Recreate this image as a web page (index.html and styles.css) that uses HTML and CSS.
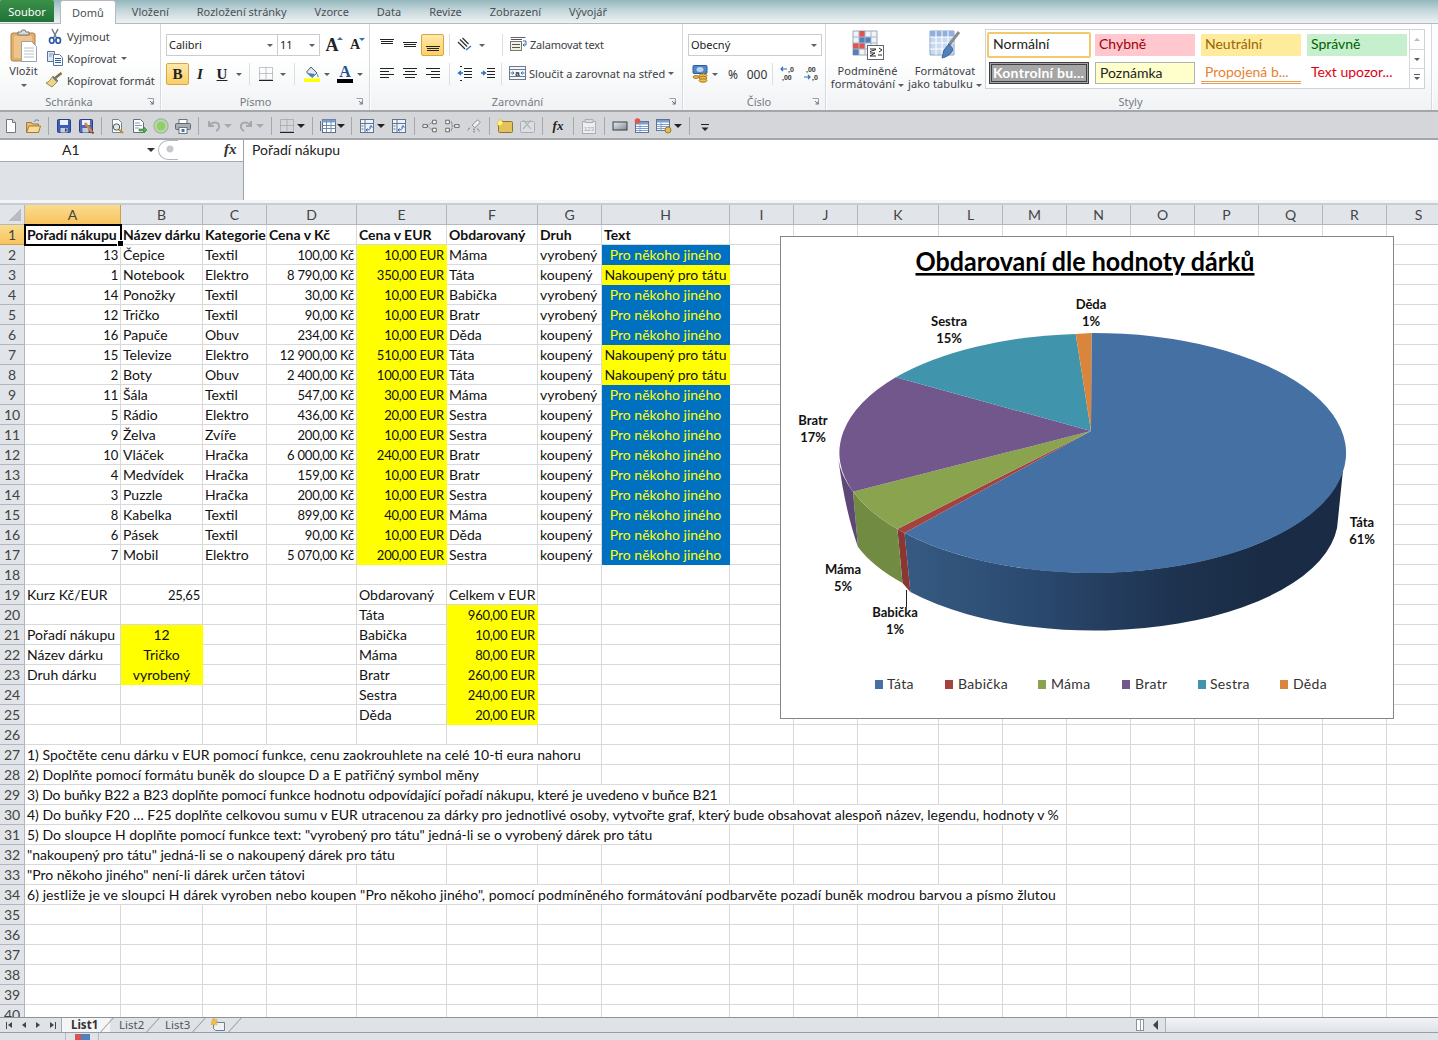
FILE: index.html
```html
<!DOCTYPE html>
<html lang="cs">

<head>
    <meta charset="UTF-8">
    <title>Excel - dárky</title>
    <link rel="stylesheet" href="styles.css">
</head>

<body>
    <!-- icon sprites -->
    <svg class="sprites" xmlns="http://www.w3.org/2000/svg">
        <symbol id="i-paste" viewBox="0 0 28 34">
            <rect x="1" y="4" width="24" height="28" rx="2" fill="#e3ae6c" stroke="#a98148"/>
            <rect x="4" y="7" width="18" height="22" fill="#eec48b"/>
            <path d="M8 6V3h3l1-2h3l1 2h3v3z" fill="#d9d9d9" stroke="#777"/>
            <path d="M11.500 12.500h10l5 5v15h-15z" fill="#fff" stroke="#9aa3ad"/>
            <path d="M14 19h10M14 22h10M14 25h10M14 28h10" stroke="#b9bfc6"/>
        </symbol>
        <symbol id="i-cut" viewBox="0 0 16 16">
            <path d="M5 1l4.500 9M11 1L6.500 10" stroke="#6f7c8a" stroke-width="1.500" fill="none"/>
            <ellipse cx="4.800" cy="12.500" rx="2.300" ry="2.800" fill="none" stroke="#2a58a6" stroke-width="1.700"/>
            <ellipse cx="11.200" cy="12.500" rx="2.300" ry="2.800" fill="none" stroke="#2a58a6" stroke-width="1.700"/>
        </symbol>
        <symbol id="i-copy" viewBox="0 0 16 16">
            <path d="M.5 1.500h7v10h-7z" fill="#dfe8f4" stroke="#56769f"/>
            <path d="M6.500 4.500h6l3 3v8h-9z" fill="#fff" stroke="#56769f"/>
            <path d="M8 8.500h6M8 10.500h6M8 12.500h6" stroke="#2f5d9b"/>
            <path d="M2 4h4M2 6h3" stroke="#7c97ba"/>
        </symbol>
        <symbol id="i-brush" viewBox="0 0 18 16">
            <path d="M16.500 1L9 7" stroke="#8a6d3b" stroke-width="2.500"/>
            <path d="M8 4l5 5-3 3-3 3-6-4c3-1 4-3 7-7z" fill="#efd58a" stroke="#a08845"/>
            <path d="M8 5l4 4" stroke="#5d7ba5" stroke-width="2"/>
        </symbol>
        <symbol id="i-borders" viewBox="0 0 16 16">
            <path d="M1.500 1.500h13v12h-13zM8 1.500v12M1.500 7.500h13" fill="none" stroke="#8a8f96" stroke-dasharray="1 1"/>
            <path d="M1 14.500h14" stroke="#222"/>
        </symbol>
        <symbol id="i-fill" viewBox="0 0 16 16">
            <path d="M7 1l6 6-5 4.500L2.500 6z" fill="#e4e9ef" stroke="#4c5a68"/>
            <path d="M3 7l8 1-3 3z" fill="#3d79c4"/>
            <path d="M13 7.500c1.500 2 2 3 1.500 3.500s-1.500 0-1.500-3.500z" fill="#4f87c9"/>
            <rect y="12.500" width="16" height="3.500" fill="#ffff00"/>
        </symbol>
        <symbol id="i-top" viewBox="0 0 16 16"><path d="M1 2.500h14M2 4.500h12M2 6.500h12" stroke="#222" fill="none"/></symbol>
        <symbol id="i-mid" viewBox="0 0 16 16"><path d="M1 5.500h14M2 7.500h12M2 9.500h12" stroke="#222" fill="none"/></symbol>
        <symbol id="i-bot" viewBox="0 0 16 16"><path d="M1 9.500h14M2 11.500h12M2 13.500h12" stroke="#222" fill="none"/></symbol>
        <symbol id="i-left" viewBox="0 0 16 16"><path d="M1 2.500h14M1 5.500h9M1 8.500h14M1 11.500h9" stroke="#222" fill="none"/></symbol>
        <symbol id="i-center" viewBox="0 0 16 16"><path d="M1 2.500h14M3 5.500h10M1 8.500h14M3 11.500h10" stroke="#222" fill="none"/></symbol>
        <symbol id="i-right" viewBox="0 0 16 16"><path d="M1 2.500h14M6 5.500h9M1 8.500h14M6 11.500h9" stroke="#222" fill="none"/></symbol>
        <symbol id="i-orient" viewBox="0 0 16 16">
            <path d="M1 5l7 7M3 2.500l7 7M5.500 1l6 6" stroke="#333" fill="none" stroke-width="1.300"/>
            <path d="M9 13l5-4" stroke="#3d6fb5" stroke-width="1.500"/>
        </symbol>
        <symbol id="i-outdent" viewBox="0 0 16 16">
            <path d="M7 2.500h8M7 5.500h8M7 8.500h8M7 11.500h8M5 14.500h-2M5 .5h-2" stroke="#222" fill="none"/>
            <path d="M6 7H2M4 5L1.500 7 4 9" stroke="#2f6fc0" stroke-width="1.300" fill="none"/>
        </symbol>
        <symbol id="i-indent" viewBox="0 0 16 16">
            <path d="M7 2.500h8M7 5.500h8M7 8.500h8M7 11.500h8" stroke="#222" fill="none"/>
            <path d="M1 7h4M3 5l2.500 2L3 9" stroke="#2f6fc0" stroke-width="1.300" fill="none"/>
        </symbol>
        <symbol id="i-wrap" viewBox="0 0 17 16">
            <path d="M.5 1.500h15" stroke="#666"/>
            <rect x=".5" y="5.500" width="11" height="9" fill="#f4f0e0" stroke="#777"/>
            <path d="M2 8.500h8M2 11.500h8M1 3.500h11" stroke="#555"/>
            <path d="M13 5h3v4h-3M14.500 7.500L13 9l1.500 1.500" stroke="#3a6cae" fill="none"/>
        </symbol>
        <symbol id="i-money" viewBox="0 0 16 18">
            <rect x="1" y=".5" width="14" height="8" rx="1" fill="#4f87c9" stroke="#2b5c9b"/>
            <ellipse cx="8" cy="4.500" rx="3.500" ry="2.500" fill="#bcd4ee"/>
            <ellipse cx="11" cy="10.500" rx="4" ry="1.700" fill="#f0bf47" stroke="#a87a1e"/>
            <ellipse cx="11" cy="13" rx="4" ry="1.700" fill="#f0bf47" stroke="#a87a1e"/>
            <ellipse cx="11" cy="15.500" rx="4" ry="1.700" fill="#f0bf47" stroke="#a87a1e"/>
            <ellipse cx="4" cy="12" rx="3" ry="1.400" fill="#f0bf47" stroke="#a87a1e"/>
        </symbol>
        <symbol id="i-cond" viewBox="0 0 32 30">
            <path d="M1 1h24v24H1z" fill="#f0f4fa" stroke="#9aa7b8"/>
            <path d="M7 1h6v6H7zM7 7h6v6H7z" fill="#e0534f"/>
            <path d="M7 7h12v6H7z" fill="#4f81bd"/>
            <path d="M1 13h12v6H1z" fill="#e0534f"/>
            <path d="M1 19h6v6H1z" fill="#4f81bd"/>
            <path d="M7 1v24M13 1v24M19 1v24M1 7h24M1 13h24M1 19h24" stroke="#a9b5c5" fill="none"/>
            <rect x="15.500" y="15.500" width="16" height="14" fill="#fff" stroke="#666"/>
            <path d="M18 19h6M18 21.500l6-2M18 23h5l-5 3h6M27 18l3 2-3 2M30 25h-4" stroke="#222" fill="none"/>
        </symbol>
        <symbol id="i-astable" viewBox="0 0 32 30">
            <path d="M1 1h24v24H1z" fill="#c9d9ef" stroke="#8ea6c7"/>
            <rect x="1" y="1" width="24" height="6" fill="#8fb0dc"/>
            <path d="M7 1v24M13 1v24M19 1v24M1 7h24M1 13h24M1 19h24" stroke="#fff" fill="none"/>
            <path d="M30 2L20 15" stroke="#8a8d90" stroke-width="3"/>
            <path d="M20 14l-5 6-2 8c4-1 9-3 11-9z" fill="#4f81bd" stroke="#3a6299"/>
        </symbol>
        <symbol id="i-new" viewBox="0 0 16 16"><path d="M3.500 1.500h6l3 3v10h-9z" fill="#fff" stroke="#6f7780"/><path d="M9.500 1.500v3h3" fill="#dfe5ec" stroke="#6f7780"/></symbol>
        <symbol id="i-open" viewBox="0 0 16 16">
            <path d="M1.500 4.500h5l1 1.500h6v8h-12z" fill="#e6be6b" stroke="#a37c32"/>
            <path d="M1.500 14.500l2.500-6.500h11.500l-2 6.500z" fill="#f6dc98" stroke="#a37c32"/>
            <path d="M9 4c1-2 3-3 5-1" stroke="#4d7fbf" fill="none"/>
        </symbol>
        <symbol id="i-save" viewBox="0 0 16 16">
            <rect x="1.500" y="1.500" width="13" height="13" rx="1" fill="#3b5fb5" stroke="#26408a"/>
            <rect x="4" y="2" width="8" height="5" fill="#eef2fa"/>
            <rect x="4.500" y="10" width="7" height="4.500" fill="#c7cfdc"/>
            <rect x="9" y="10.500" width="1.500" height="3" fill="#333"/>
        </symbol>
        <symbol id="i-saveall" viewBox="0 0 16 16">
            <rect x="1.500" y="1.500" width="13" height="13" rx="1" fill="#5468b0" stroke="#2c3d85"/>
            <rect x="4" y="2" width="8" height="5" fill="#eef2fa"/>
            <rect x="4.500" y="10" width="6" height="4.500" fill="#c7cfdc"/>
            <path d="M7 5l7 9" stroke="#d18a3e" stroke-width="2.500"/>
            <path d="M14 14l1.500 1.500" stroke="#a33" stroke-width="2"/>
        </symbol>
        <symbol id="i-preview" viewBox="0 0 16 16">
            <path d="M3.500 1.500h6l3 3v10h-9z" fill="#fff" stroke="#7a828c"/>
            <circle cx="7.500" cy="9" r="3.200" fill="#dbe8f5" stroke="#555"/>
            <path d="M10 11.500l4 3.500" stroke="#c78a30" stroke-width="2"/>
        </symbol>
        <symbol id="i-publish" viewBox="0 0 16 16">
            <path d="M2.500 1.500h7l3 3v10h-10z" fill="#fff" stroke="#66707c"/>
            <path d="M4 5h5M4 7.500h7M4 10h4" stroke="#7c98bd"/>
            <path d="M8 11h5V9l3 3-3 3v-2H8z" fill="#53b04a" stroke="#33802c" stroke-width=".6"/>
        </symbol>
        <symbol id="i-orb" viewBox="0 0 16 16">
            <circle cx="8" cy="8" r="7" fill="#bcdca6" stroke="#a9b7a5" stroke-width="1.500"/>
            <circle cx="8" cy="8" r="4.500" fill="#8fce6b"/>
        </symbol>
        <symbol id="i-print" viewBox="0 0 16 16">
            <rect x="4" y="1.500" width="8" height="5" fill="#fff" stroke="#6d757e"/>
            <rect x=".5" y="5.500" width="15" height="6" rx="1" fill="#a8aeb6" stroke="#5f666e"/>
            <rect x="4" y="9.500" width="8" height="6" fill="#fff" stroke="#6d757e"/>
            <rect x="6.500" y="11" width="3" height="3" fill="#3f77bd"/>
        </symbol>
        <symbol id="i-undo" viewBox="0 0 16 16"><path d="M3 3v5h5M3.500 8C5 4 12 3 13 7.500c.5 2.500-1 4.500-3 5.500" fill="none" stroke="#a5a9ae" stroke-width="2"/></symbol>
        <symbol id="i-redo" viewBox="0 0 16 16"><path d="M13 3v5H8M12.500 8C11 4 4 3 3 7.500c-.5 2.500 1 4.500 3 5.500" fill="none" stroke="#a5a9ae" stroke-width="2"/></symbol>
        <symbol id="i-tablelist" viewBox="0 0 16 16">
            <rect x="2.500" y="1.500" width="13" height="13" fill="#fff" stroke="#5d6f86"/>
            <rect x="2.500" y="1.500" width="13" height="3" fill="#7d9fcf"/>
            <path d="M2.500 7.500h13M2.500 10.500h13M6.500 1.500v13M11 1.500v13" stroke="#6e8bb3"/>
            <path d="M.5 3v10" stroke="#5d6f86"/>
        </symbol>
        <symbol id="i-pivot" viewBox="0 0 16 16">
            <rect x="1.500" y="1.500" width="13" height="13" fill="#eef3fa" stroke="#61758f"/>
            <path d="M1.500 5.500h13M6 1.500v13" stroke="#61758f"/>
            <path d="M2.500 8h2M2.500 11h2" stroke="#61758f"/>
            <path d="M8 12c3 0 4-2 4-4M10.500 9.500L12 7.500l1.500 2M8.500 10.500L7 12l1.500 1.500" stroke="#2c6bb6" fill="none"/>
        </symbol>
        <symbol id="i-shapes-l" viewBox="0 0 18 16">
            <path d="M12 1.500h4v4h-4zM12 10.500h4v4h-4zM1 6.500h5v3H1z" fill="#fff" stroke="#555"/>
            <path d="M6 8l6-5M6 8l6 5" stroke="#555" stroke-dasharray="1 1"/>
        </symbol>
        <symbol id="i-shapes-r" viewBox="0 0 18 16">
            <path d="M2 1.500h4v4H2zM2 10.500h4v4H2zM12 6.500h5v3h-5z" fill="#fff" stroke="#555"/>
            <path d="M6 3.500h3V8h3M6 12.500h3V8" stroke="#555" stroke-dasharray="1 1" fill="none"/>
        </symbol>
        <symbol id="i-eraser" viewBox="0 0 18 16">
            <path d="M7 7l6-6 3 3-6 6z" fill="#eef1f5" stroke="#7a828c"/>
            <path d="M4 10l-2 3M9 11v4M13 11l2 3" stroke="#444" stroke-dasharray="1.500 1"/>
        </symbol>
        <symbol id="i-stick" viewBox="0 0 16 16">
            <rect x="1.500" y="3.500" width="14" height="11" rx="1" fill="#e3c25d" stroke="#8e7530"/>
            <path d="M3 1l1 2 2-1-1 2 2 1-2 1 1 2-2-1-1 2-1-2-2 1 1-2-1-1z" fill="#fff27a" stroke="#d5b62d" stroke-width=".5"/>
        </symbol>
        <symbol id="i-stick-off" viewBox="0 0 16 16">
            <rect x="1.500" y="3.500" width="14" height="11" rx="1" fill="#dcdee1" stroke="#aaaeb3"/>
            <path d="M4 2l8 9M4 11l8-9" stroke="#b3b7bb" stroke-width="1.300"/>
        </symbol>
        <symbol id="i-rect" viewBox="0 0 16 16">
            <rect x="1" y="4" width="14" height="8" fill="url(#rect-fade)" stroke="#3a3f45"/>
        </symbol>
        <symbol id="i-form" viewBox="0 0 16 16">
            <rect x="1.500" y="3.500" width="13" height="11" fill="#fff" stroke="#5f7390"/>
            <rect x="2" y="4" width="12" height="2.500" fill="#7d9fcf"/>
            <path d="M2 8.500h12M2 10.500h12M2 12.500h12M6 6.500v8" stroke="#7d9fcf"/>
            <circle cx="3.500" cy="3" r="2.800" fill="#e2574c"/>
        </symbol>
        <symbol id="i-formedit" viewBox="0 0 16 16">
            <rect x=".5" y="1.500" width="13" height="11" fill="#fff" stroke="#5f7390"/>
            <rect x="1" y="2" width="12" height="2.500" fill="#7d9fcf"/>
            <path d="M1 6.500h12M1 8.500h12M1 10.500h12M5 4.500v8" stroke="#7d9fcf"/>
            <circle cx="12" cy="12" r="3" fill="#e3bd52" stroke="#987c28"/>
        </symbol>
        <symbol id="i-custom" viewBox="0 0 12 16">
            <path d="M2 6.500h8" stroke="#222"/><path d="M2.500 9.500h7L6 13z" fill="#222"/>
        </symbol>
        <symbol id="i-launch" viewBox="0 0 8 8">
            <path d="M.5 .5h6v6" fill="none" stroke="#9ba1a8"/>
            <path d="M3 3l3 3M6 3.500V6H3.500" fill="none" stroke="#6d7580"/>
        </symbol>
        <symbol id="i-newsheet" viewBox="0 0 16 14">
            <path d="M3.500 4.500h11v8h-9l-2-2z" fill="#eef2f6" stroke="#6a7f98"/>
            <path d="M4 0l1 2 2-1-1 2 2 1-2 1 1 2-2-1-1 2-1-2-2 1 1-2-1-1 2-1-1-2 2 1z" fill="#f4c141" stroke="#c4912a" stroke-width=".4"/>
        </symbol>
        <linearGradient id="rect-fade" x1="0" y1="0" x2="1" y2="1">
            <stop offset="0" stop-color="#e8ebee"/>
            <stop offset="1" stop-color="#7f8a96"/>
        </linearGradient>
    </svg>

    <!-- ribbon tabs -->
    <nav class="tabs">
        <span class="tab-file">Soubor</span>
        <span class="tab tab-active">Domů</span>
        <span class="tab">Vložení</span>
        <span class="tab">Rozložení stránky</span>
        <span class="tab">Vzorce</span>
        <span class="tab">Data</span>
        <span class="tab">Revize</span>
        <span class="tab">Zobrazení</span>
        <span class="tab">Vývojář</span>
    </nav>

    <!-- ribbon -->
    <div class="ribbon">
        <section class="group group-clip">
            <div class="group-body clip-body">
                <div class="big-btn paste-btn">
                    <svg class="ico-paste"><use href="#i-paste"/></svg>
                    <span class="big-label">Vložit</span>
                    <i class="caret"></i>
                </div>
                <div class="clip-list">
                    <div class="clip-row"><svg class="ico"><use href="#i-cut"/></svg><span>Vyjmout</span></div>
                    <div class="clip-row"><svg class="ico"><use href="#i-copy"/></svg><span>Kopírovat</span><i class="caret caret-near"></i></div>
                    <div class="clip-row"><svg class="ico ico-brush"><use href="#i-brush"/></svg><span>Kopírovat formát</span></div>
                </div>
            </div>
            <div class="group-label">Schránka<svg class="launch"><use href="#i-launch"/></svg></div>
        </section>

        <section class="group group-font">
            <div class="group-body stack">
                <div class="tool-row">
                    <div class="combo combo-font"><span>Calibri</span><i class="caret"></i></div>
                    <div class="combo combo-size"><span>11</span><i class="caret"></i></div>
                    <span class="tool grow-a">A<i class="tri-up"></i></span>
                    <span class="tool shrink-a">A<i class="tri-down"></i></span>
                </div>
                <div class="tool-row">
                    <span class="tool tool-on tool-b face-b">B</span>
                    <span class="tool face-i">I</span>
                    <span class="tool face-u">U</span>
                    <span class="drop"><i class="caret"></i></span>
                    <i class="sep ml5"></i>
                    <span class="tool ml5"><svg class="ico"><use href="#i-borders"/></svg></span>
                    <span class="drop"><i class="caret"></i></span>
                    <i class="sep ml6"></i>
                    <span class="tool ml6"><svg class="ico"><use href="#i-fill"/></svg></span>
                    <span class="drop drop-sm"><i class="caret"></i></span>
                    <span class="tool ml4 face-color">A<i class="color-bar"></i></span>
                    <span class="drop drop-sm"><i class="caret"></i></span>
                </div>
            </div>
            <div class="group-label">Písmo<svg class="launch"><use href="#i-launch"/></svg></div>
        </section>

        <section class="group group-align">
            <div class="group-body stack">
                <div class="tool-row">
                    <span class="tool tool-w"><svg class="ico"><use href="#i-top"/></svg></span>
                    <span class="tool tool-w"><svg class="ico"><use href="#i-mid"/></svg></span>
                    <span class="tool tool-w tool-on"><svg class="ico"><use href="#i-bot"/></svg></span>
                    <i class="sep ml5"></i>
                    <span class="tool ml4"><svg class="ico"><use href="#i-orient"/></svg></span>
                    <span class="drop"><i class="caret"></i></span>
                    <i class="sep ml15"></i>
                    <span class="wide-btn"><svg class="ico ico-wide"><use href="#i-wrap"/></svg><span class="wrap-text">Zalamovat text</span></span>
                </div>
                <div class="tool-row">
                    <span class="tool tool-w"><svg class="ico"><use href="#i-left"/></svg></span>
                    <span class="tool tool-w"><svg class="ico"><use href="#i-center"/></svg></span>
                    <span class="tool tool-w"><svg class="ico"><use href="#i-right"/></svg></span>
                    <i class="sep ml5"></i>
                    <span class="tool ml4"><svg class="ico"><use href="#i-outdent"/></svg></span>
                    <span class="tool ml1"><svg class="ico"><use href="#i-indent"/></svg></span>
                    <i class="sep ml2"></i>
                    <span class="wide-btn">
                        <svg class="ico ico-wide" viewBox="0 0 17 16">
                            <rect x=".5" y="1.500" width="16" height="13" fill="#f3f6fb" stroke="#6c7a8c"/>
                            <path d="M.5 4.500h16M.5 11.500h16" stroke="#6c7a8c"/>
                            <path d="M1.500 8H5M3.500 6.500L5 8 3.500 9.500M15.500 8H12M13.500 6.500L12 8l1.500 1.500" stroke="#3a6cae" fill="none"/>
                            <text x="8.500" y="10.500" class="svg-mini">a</text>
                        </svg>
                        Sloučit a zarovnat na střed<i class="caret"></i>
                    </span>
                </div>
            </div>
            <div class="group-label">Zarovnání<svg class="launch"><use href="#i-launch"/></svg></div>
        </section>

        <section class="group group-number">
            <div class="group-body stack">
                <div class="tool-row">
                    <div class="combo combo-format"><span>Obecný</span><i class="caret"></i></div>
                </div>
                <div class="tool-row">
                    <span class="tool ml1"><svg class="ico ico-tall"><use href="#i-money"/></svg></span>
                    <span class="drop drop-md"><i class="caret"></i></span>
                    <span class="tool ml3 face-num">%</span>
                    <span class="tool ml2 face-num">000</span>
                    <i class="sep ml4"></i>
                    <span class="tool ml4">
                        <svg class="ico" viewBox="0 0 16 16">
                            <path d="M7 3H1M3 1L1 3l2 2" stroke="#2f6fc0" stroke-width="1.200" fill="none"/>
                            <text x="8" y="6" class="svg-digits">,0</text>
                            <text x="2" y="14" class="svg-digits">,00</text>
                        </svg>
                    </span>
                    <span class="tool ml1">
                        <svg class="ico" viewBox="0 0 16 16">
                            <text x="3" y="6" class="svg-digits">,00</text>
                            <path d="M1 11h6M5 9l2 2-2 2" stroke="#2f6fc0" stroke-width="1.200" fill="none"/>
                            <text x="9" y="14" class="svg-digits">,0</text>
                        </svg>
                    </span>
                </div>
            </div>
            <div class="group-label">Číslo<svg class="launch"><use href="#i-launch"/></svg></div>
        </section>

        <section class="group group-styles">
            <div class="group-body styles-body">
                <div class="big-btn cond-btn">
                    <svg class="ico-big"><use href="#i-cond"/></svg>
                    <span class="big-label">Podmíněné<br>formátování<i class="caret caret-inline"></i></span>
                </div>
                <div class="big-btn table-btn">
                    <svg class="ico-big"><use href="#i-astable"/></svg>
                    <span class="big-label">Formátovat<br>jako tabulku<i class="caret caret-inline"></i></span>
                </div>
                <div class="gallery">
                    <div class="gallery-grid">
                        <span class="cs cs-normal">Normální</span>
                        <span class="cs cs-bad">Chybně</span>
                        <span class="cs cs-neutral">Neutrální</span>
                        <span class="cs cs-good">Správně</span>
                        <span class="cs cs-check">Kontrolní bu...</span>
                        <span class="cs cs-note">Poznámka</span>
                        <span class="cs cs-linked">Propojená b...</span>
                        <span class="cs cs-warn">Text upozor...</span>
                    </div>
                    <div class="gallery-scroll">
                        <span><i class="tri-up tri-off"></i></span>
                        <span><i class="caret"></i></span>
                        <span class="gallery-more"><i class="caret"></i></span>
                    </div>
                </div>
            </div>
            <div class="group-label">Styly</div>
        </section>
    </div>

    <!-- quick access toolbar -->
    <div class="qat">
        <svg class="qi"><use href="#i-new"/></svg>
        <svg class="qi"><use href="#i-open"/></svg>
        <i class="qsep"></i>
        <svg class="qi"><use href="#i-save"/></svg>
        <svg class="qi"><use href="#i-saveall"/></svg>
        <i class="qsep"></i>
        <svg class="qi"><use href="#i-preview"/></svg>
        <svg class="qi"><use href="#i-publish"/></svg>
        <svg class="qi"><use href="#i-orb"/></svg>
        <svg class="qi"><use href="#i-print"/></svg>
        <i class="qsep"></i>
        <svg class="qi"><use href="#i-undo"/></svg>
        <i class="qarrow qarrow-off"></i>
        <svg class="qi"><use href="#i-redo"/></svg>
        <i class="qarrow qarrow-off"></i>
        <i class="qsep"></i>
        <svg class="qi"><use href="#i-borders"/></svg>
        <i class="qarrow"></i>
        <i class="qsep"></i>
        <svg class="qi"><use href="#i-tablelist"/></svg>
        <i class="qarrow qarrow-tight"></i>
        <i class="qsep"></i>
        <svg class="qi"><use href="#i-pivot"/></svg>
        <i class="qarrow"></i>
        <svg class="qi"><use href="#i-pivot"/></svg>
        <i class="qsep"></i>
        <svg class="qi"><use href="#i-shapes-l"/></svg>
        <svg class="qi"><use href="#i-shapes-r"/></svg>
        <svg class="qi"><use href="#i-eraser"/></svg>
        <i class="qsep"></i>
        <svg class="qi"><use href="#i-stick"/></svg>
        <svg class="qi"><use href="#i-stick-off"/></svg>
        <i class="qsep"></i>
        <span class="qi qfx">fx</span>
        <i class="qsep"></i>
        <svg class="qi" viewBox="0 0 16 16">
            <rect x="1.500" y="3.500" width="13" height="12" fill="#eceef1" stroke="#aaaeb3"/>
            <path d="M4 1.500h8v3H4z" fill="#d9dbde" stroke="#aaaeb3"/>
            <text x="8" y="13" class="svg-calc">123</text>
        </svg>
        <i class="qsep"></i>
        <svg class="qi"><use href="#i-rect"/></svg>
        <svg class="qi"><use href="#i-form"/></svg>
        <svg class="qi"><use href="#i-formedit"/></svg>
        <i class="qarrow"></i>
        <i class="qsep"></i>
        <svg class="qi"><use href="#i-custom"/></svg>
    </div>

    <!-- formula bar -->
    <div class="formula">
        <div class="formula-left">
            <div class="formula-top">
                <div class="name-box">A1<i class="caret"></i></div>
                <div class="grip"></div>
                <span class="fx">fx</span>
            </div>
        </div>
        <div class="formula-input">Pořadí nákupu</div>
    </div>
    <div class="formula-gap"></div>

    <!-- sheet -->
    <div class="sheet">
        <table class="cells">
            <colgroup>
                <col class="c-head"><col class="c-a"><col class="c-b"><col class="c-c"><col class="c-d"><col class="c-e"><col class="c-f"><col class="c-g"><col class="c-h"><col class="c-std"><col class="c-std"><col class="c-k"><col class="c-std"><col class="c-std"><col class="c-std"><col class="c-std"><col class="c-std"><col class="c-std"><col class="c-std"><col class="c-std">
            </colgroup>
            <tr class="col-heads"><th class="corner"></th><th class="on">A</th><th>B</th><th>C</th><th>D</th><th>E</th><th>F</th><th>G</th><th>H</th><th>I</th><th>J</th><th>K</th><th>L</th><th>M</th><th>N</th><th>O</th><th>P</th><th>Q</th><th>R</th><th>S</th></tr>
            <tr class="title-row"><th class="on">1</th><td class="active">Pořadí nákupu</td><td>Název dárku</td><td>Kategorie</td><td>Cena v Kč</td><td>Cena v EUR</td><td>Obdarovaný</td><td>Druh</td><td>Text</td><td></td><td></td><td></td><td></td><td></td><td></td><td></td><td></td><td></td><td></td><td></td></tr>
            <tr><th>2</th><td class="num">13</td><td>Čepice</td><td>Textil</td><td class="num">100,00 Kč</td><td class="num yellow">10,00 EUR</td><td>Máma</td><td>vyrobený</td><td class="ctr blue">Pro někoho jiného</td><td></td><td></td><td></td><td></td><td></td><td></td><td></td><td></td><td></td><td></td><td></td></tr>
            <tr><th>3</th><td class="num">1</td><td>Notebook</td><td>Elektro</td><td class="num">8 790,00 Kč</td><td class="num yellow">350,00 EUR</td><td>Táta</td><td>koupený</td><td class="ctr yellow">Nakoupený pro tátu</td><td></td><td></td><td></td><td></td><td></td><td></td><td></td><td></td><td></td><td></td><td></td></tr>
            <tr><th>4</th><td class="num">14</td><td>Ponožky</td><td>Textil</td><td class="num">30,00 Kč</td><td class="num yellow">10,00 EUR</td><td>Babička</td><td>vyrobený</td><td class="ctr blue">Pro někoho jiného</td><td></td><td></td><td></td><td></td><td></td><td></td><td></td><td></td><td></td><td></td><td></td></tr>
            <tr><th>5</th><td class="num">12</td><td>Tričko</td><td>Textil</td><td class="num">90,00 Kč</td><td class="num yellow">10,00 EUR</td><td>Bratr</td><td>vyrobený</td><td class="ctr blue">Pro někoho jiného</td><td></td><td></td><td></td><td></td><td></td><td></td><td></td><td></td><td></td><td></td><td></td></tr>
            <tr><th>6</th><td class="num">16</td><td>Papuče</td><td>Obuv</td><td class="num">234,00 Kč</td><td class="num yellow">10,00 EUR</td><td>Děda</td><td>koupený</td><td class="ctr blue">Pro někoho jiného</td><td></td><td></td><td></td><td></td><td></td><td></td><td></td><td></td><td></td><td></td><td></td></tr>
            <tr><th>7</th><td class="num">15</td><td>Televize</td><td>Elektro</td><td class="num">12 900,00 Kč</td><td class="num yellow">510,00 EUR</td><td>Táta</td><td>koupený</td><td class="ctr yellow">Nakoupený pro tátu</td><td></td><td></td><td></td><td></td><td></td><td></td><td></td><td></td><td></td><td></td><td></td></tr>
            <tr><th>8</th><td class="num">2</td><td>Boty</td><td>Obuv</td><td class="num">2 400,00 Kč</td><td class="num yellow">100,00 EUR</td><td>Táta</td><td>koupený</td><td class="ctr yellow">Nakoupený pro tátu</td><td></td><td></td><td></td><td></td><td></td><td></td><td></td><td></td><td></td><td></td><td></td></tr>
            <tr><th>9</th><td class="num">11</td><td>Šála</td><td>Textil</td><td class="num">547,00 Kč</td><td class="num yellow">30,00 EUR</td><td>Máma</td><td>vyrobený</td><td class="ctr blue">Pro někoho jiného</td><td></td><td></td><td></td><td></td><td></td><td></td><td></td><td></td><td></td><td></td><td></td></tr>
            <tr><th>10</th><td class="num">5</td><td>Rádio</td><td>Elektro</td><td class="num">436,00 Kč</td><td class="num yellow">20,00 EUR</td><td>Sestra</td><td>koupený</td><td class="ctr blue">Pro někoho jiného</td><td></td><td></td><td></td><td></td><td></td><td></td><td></td><td></td><td></td><td></td><td></td></tr>
            <tr><th>11</th><td class="num">9</td><td>Želva</td><td>Zvíře</td><td class="num">200,00 Kč</td><td class="num yellow">10,00 EUR</td><td>Sestra</td><td>koupený</td><td class="ctr blue">Pro někoho jiného</td><td></td><td></td><td></td><td></td><td></td><td></td><td></td><td></td><td></td><td></td><td></td></tr>
            <tr><th>12</th><td class="num">10</td><td>Vláček</td><td>Hračka</td><td class="num">6 000,00 Kč</td><td class="num yellow">240,00 EUR</td><td>Bratr</td><td>koupený</td><td class="ctr blue">Pro někoho jiného</td><td></td><td></td><td></td><td></td><td></td><td></td><td></td><td></td><td></td><td></td><td></td></tr>
            <tr><th>13</th><td class="num">4</td><td>Medvídek</td><td>Hračka</td><td class="num">159,00 Kč</td><td class="num yellow">10,00 EUR</td><td>Bratr</td><td>koupený</td><td class="ctr blue">Pro někoho jiného</td><td></td><td></td><td></td><td></td><td></td><td></td><td></td><td></td><td></td><td></td><td></td></tr>
            <tr><th>14</th><td class="num">3</td><td>Puzzle</td><td>Hračka</td><td class="num">200,00 Kč</td><td class="num yellow">10,00 EUR</td><td>Sestra</td><td>koupený</td><td class="ctr blue">Pro někoho jiného</td><td></td><td></td><td></td><td></td><td></td><td></td><td></td><td></td><td></td><td></td><td></td></tr>
            <tr><th>15</th><td class="num">8</td><td>Kabelka</td><td>Textil</td><td class="num">899,00 Kč</td><td class="num yellow">40,00 EUR</td><td>Máma</td><td>koupený</td><td class="ctr blue">Pro někoho jiného</td><td></td><td></td><td></td><td></td><td></td><td></td><td></td><td></td><td></td><td></td><td></td></tr>
            <tr><th>16</th><td class="num">6</td><td>Pásek</td><td>Textil</td><td class="num">90,00 Kč</td><td class="num yellow">10,00 EUR</td><td>Děda</td><td>koupený</td><td class="ctr blue">Pro někoho jiného</td><td></td><td></td><td></td><td></td><td></td><td></td><td></td><td></td><td></td><td></td><td></td></tr>
            <tr><th>17</th><td class="num">7</td><td>Mobil</td><td>Elektro</td><td class="num">5 070,00 Kč</td><td class="num yellow">200,00 EUR</td><td>Sestra</td><td>koupený</td><td class="ctr blue">Pro někoho jiného</td><td></td><td></td><td></td><td></td><td></td><td></td><td></td><td></td><td></td><td></td><td></td></tr>
            <tr><th>18</th><td></td><td></td><td></td><td></td><td></td><td></td><td></td><td></td><td></td><td></td><td></td><td></td><td></td><td></td><td></td><td></td><td></td><td></td><td></td></tr>
            <tr><th>19</th><td>Kurz Kč/EUR</td><td class="num">25,65</td><td></td><td></td><td>Obdarovaný</td><td>Celkem v EUR</td><td></td><td></td><td></td><td></td><td></td><td></td><td></td><td></td><td></td><td></td><td></td><td></td><td></td></tr>
            <tr><th>20</th><td></td><td></td><td></td><td></td><td>Táta</td><td class="num yellow">960,00 EUR</td><td></td><td></td><td></td><td></td><td></td><td></td><td></td><td></td><td></td><td></td><td></td><td></td><td></td></tr>
            <tr><th>21</th><td>Pořadí nákupu</td><td class="ctr yellow">12</td><td></td><td></td><td>Babička</td><td class="num yellow">10,00 EUR</td><td></td><td></td><td></td><td></td><td></td><td></td><td></td><td></td><td></td><td></td><td></td><td></td><td></td></tr>
            <tr><th>22</th><td>Název dárku</td><td class="ctr yellow">Tričko</td><td></td><td></td><td>Máma</td><td class="num yellow">80,00 EUR</td><td></td><td></td><td></td><td></td><td></td><td></td><td></td><td></td><td></td><td></td><td></td><td></td><td></td></tr>
            <tr><th>23</th><td>Druh dárku</td><td class="ctr yellow">vyrobený</td><td></td><td></td><td>Bratr</td><td class="num yellow">260,00 EUR</td><td></td><td></td><td></td><td></td><td></td><td></td><td></td><td></td><td></td><td></td><td></td><td></td><td></td></tr>
            <tr><th>24</th><td></td><td></td><td></td><td></td><td>Sestra</td><td class="num yellow">240,00 EUR</td><td></td><td></td><td></td><td></td><td></td><td></td><td></td><td></td><td></td><td></td><td></td><td></td><td></td></tr>
            <tr><th>25</th><td></td><td></td><td></td><td></td><td>Děda</td><td class="num yellow">20,00 EUR</td><td></td><td></td><td></td><td></td><td></td><td></td><td></td><td></td><td></td><td></td><td></td><td></td><td></td></tr>
            <tr><th>26</th><td></td><td></td><td></td><td></td><td></td><td></td><td></td><td></td><td></td><td></td><td></td><td></td><td></td><td></td><td></td><td></td><td></td><td></td><td></td></tr>
            <tr><th>27</th><td colspan="7">1) Spočtěte cenu dárku v EUR pomocí funkce, cenu zaokrouhlete na celé 10-ti eura nahoru</td><td></td><td></td><td></td><td></td><td></td><td></td><td></td><td></td><td></td><td></td><td></td><td></td></tr>
            <tr><th>28</th><td colspan="6">2) Doplňte pomocí formátu buněk do sloupce D a E patřičný symbol měny</td><td></td><td></td><td></td><td></td><td></td><td></td><td></td><td></td><td></td><td></td><td></td><td></td><td></td></tr>
            <tr><th>29</th><td colspan="8" class="note-tight">3) Do buňky B22 a B23 doplňte pomocí funkce hodnotu odpovídající pořadí nákupu, které je uvedeno v buňce B21</td><td></td><td></td><td></td><td></td><td></td><td></td><td></td><td></td><td></td><td></td><td></td></tr>
            <tr><th>30</th><td colspan="13">4) Do buňky F20 … F25 doplňte celkovou sumu v EUR utracenou za dárky pro jednotlivé osoby, vytvořte graf, který bude obsahovat alespoň název, legendu, hodnoty v %</td><td></td><td></td><td></td><td></td><td></td><td></td></tr>
            <tr><th>31</th><td colspan="8">5) Do sloupce H doplňte pomocí funkce text: "vyrobený pro tátu" jedná-li se o vyrobený dárek pro tátu</td><td></td><td></td><td></td><td></td><td></td><td></td><td></td><td></td><td></td><td></td><td></td></tr>
            <tr><th>32</th><td colspan="5">"nakoupený pro tátu" jedná-li se o nakoupený dárek pro tátu</td><td></td><td></td><td></td><td></td><td></td><td></td><td></td><td></td><td></td><td></td><td></td><td></td><td></td><td></td></tr>
            <tr><th>33</th><td colspan="4">"Pro někoho jiného" není-li dárek určen tátovi</td><td></td><td></td><td></td><td></td><td></td><td></td><td></td><td></td><td></td><td></td><td></td><td></td><td></td><td></td><td></td></tr>
            <tr><th>34</th><td colspan="13" class="note-loose">6) jestliže je ve sloupci H dárek vyroben nebo koupen "Pro někoho jiného", pomocí podmíněného formátování podbarvěte pozadí buněk modrou barvou a písmo žlutou</td><td></td><td></td><td></td><td></td><td></td><td></td></tr>
            <tr><th>35</th><td></td><td></td><td></td><td></td><td></td><td></td><td></td><td></td><td></td><td></td><td></td><td></td><td></td><td></td><td></td><td></td><td></td><td></td><td></td></tr>
            <tr><th>36</th><td></td><td></td><td></td><td></td><td></td><td></td><td></td><td></td><td></td><td></td><td></td><td></td><td></td><td></td><td></td><td></td><td></td><td></td><td></td></tr>
            <tr><th>37</th><td></td><td></td><td></td><td></td><td></td><td></td><td></td><td></td><td></td><td></td><td></td><td></td><td></td><td></td><td></td><td></td><td></td><td></td><td></td></tr>
            <tr><th>38</th><td></td><td></td><td></td><td></td><td></td><td></td><td></td><td></td><td></td><td></td><td></td><td></td><td></td><td></td><td></td><td></td><td></td><td></td><td></td></tr>
            <tr><th>39</th><td></td><td></td><td></td><td></td><td></td><td></td><td></td><td></td><td></td><td></td><td></td><td></td><td></td><td></td><td></td><td></td><td></td><td></td><td></td></tr>
            <tr><th>40</th><td></td><td></td><td></td><td></td><td></td><td></td><td></td><td></td><td></td><td></td><td></td><td></td><td></td><td></td><td></td><td></td><td></td><td></td><td></td></tr>
        </table>

        <!-- chart floats over the cells; svg coordinates are screen pixels -->
        <div class="chart">
            <svg class="chart-svg" viewBox="780 236 614 483" xmlns="http://www.w3.org/2000/svg">
                <defs>
                    <linearGradient id="side-tata" gradientUnits="userSpaceOnUse" x1="905" y1="0" x2="1260" y2="0">
                        <stop offset="0" stop-color="#365a82"/>
                        <stop offset=".35" stop-color="#2b4a70"/>
                        <stop offset=".75" stop-color="#1e3350"/>
                        <stop offset="1" stop-color="#1a2c45"/>
                    </linearGradient>
                </defs>
                <path d="M1343 470L1338 519A244 113 0 0 1 910.400 592L904.500 533A253 120 0 0 0 1343 470Z" fill="url(#side-tata)"/>
                <path d="M904.500 533L897.400 529L902.500 583L910.400 592Z" fill="#8a3634"/>
                <path d="M897.400 529A253 120 0 0 1 853 491.700L858 547A244 113 0 0 0 902.500 583Z" fill="#728b43"/>
                <path d="M853 491.700A253 120 0 0 1 838.500 460Q845 510 858 547Z" fill="#5d4875"/>
                <path d="M1091 431L1091.500 333A253 120 0 1 1 904.500 533Z" fill="#4470a4"/>
                <path d="M1091 431L904.500 533A253 120 0 0 1 897.400 529Z" fill="#a5423f"/>
                <path d="M1091 431L897.400 529A253 120 0 0 1 853 491.700Z" fill="#8aa34e"/>
                <path d="M1091 431L853 491.700A253 120 0 0 1 895.800 377.300Z" fill="#72578d"/>
                <path d="M1091 431L895.800 377.300A253 120 0 0 1 1075.700 334Z" fill="#4094ab"/>
                <path d="M1091 431L1075.700 334A253 120 0 0 1 1091.500 333Z" fill="#da853c"/>
                <path d="M906.500 590V607" stroke="#222" fill="none"/>

                <text class="chart-title" x="1085" y="271" textLength="339" lengthAdjust="spacingAndGlyphs">Obdarovaní dle hodnoty dárků</text>

                <text class="chart-lbl" x="1091" y="309">Děda</text>
                <text class="chart-lbl" x="1091" y="326">1%</text>
                <text class="chart-lbl" x="949" y="326">Sestra</text>
                <text class="chart-lbl" x="949" y="343">15%</text>
                <text class="chart-lbl" x="813" y="425">Bratr</text>
                <text class="chart-lbl" x="813" y="442">17%</text>
                <text class="chart-lbl" x="1362" y="527">Táta</text>
                <text class="chart-lbl" x="1362" y="544">61%</text>
                <text class="chart-lbl" x="843" y="574">Máma</text>
                <text class="chart-lbl" x="843" y="591">5%</text>
                <text class="chart-lbl" x="895" y="617">Babička</text>
                <text class="chart-lbl" x="895" y="634">1%</text>

                <rect x="875" y="680" width="8" height="9" fill="#4470a4"/>
                <text class="chart-leg" x="887" y="689">Táta</text>
                <rect x="945" y="680" width="8" height="9" fill="#a5423f"/>
                <text class="chart-leg" x="958" y="689">Babička</text>
                <rect x="1038" y="680" width="8" height="9" fill="#8aa34e"/>
                <text class="chart-leg" x="1051" y="689">Máma</text>
                <rect x="1122" y="680" width="8" height="9" fill="#72578d"/>
                <text class="chart-leg" x="1135" y="689">Bratr</text>
                <rect x="1198" y="680" width="8" height="9" fill="#4094ab"/>
                <text class="chart-leg" x="1210" y="689">Sestra</text>
                <rect x="1280" y="680" width="8" height="9" fill="#da853c"/>
                <text class="chart-leg" x="1293" y="689">Děda</text>
            </svg>
        </div>
    </div>

    <!-- sheet tabs and scrollbar -->
    <div class="sheet-bar">
        <div class="sheet-nav">
            <span class="nav-first"></span><span class="nav-prev"></span><span class="nav-next"></span><span class="nav-last"></span>
        </div>
        <span class="sheet-tab sheet-tab-on">List1</span>
        <span class="sheet-tab">List2</span>
        <span class="sheet-tab">List3</span>
        <span class="sheet-tab sheet-tab-new"><svg class="newsheet"><use href="#i-newsheet"/></svg></span>
        <span class="bar-fill"></span>
        <span class="split-handle"></span>
        <span class="scroll-left"></span>
        <span class="scroll-track"></span>
    </div>
    <div class="status">
        <span class="status-cell"><i class="status-icon"></i></span>
    </div>
</body>

</html>
```

FILE: styles.css
```css
html, body {
    margin: 0;
    height: 1040px;
    overflow: hidden;
}

body {
    display: flex;
    flex-direction: column;
    width: 1438px;
    background: #fff;
    font-family: "Noto Sans", sans-serif;
    font-size: 11px;
    color: #3d4045;
}

.sprites {
    position: absolute;
    width: 0;
    height: 0;
}

i {
    display: block;
    font-style: normal;
}

svg {
    display: block;
    overflow: visible;
}

.svg-mini {
    font: 700 8px "Liberation Sans", sans-serif;
    text-anchor: middle;
    fill: #333;
}

.svg-digits {
    font: 700 7px "Liberation Sans", sans-serif;
    fill: #333;
}

.svg-calc {
    font: 400 6px "Liberation Sans", sans-serif;
    text-anchor: middle;
    fill: #9b9fa4;
}

/* ribbon tabs */
.tabs {
    flex: none;
    display: flex;
    align-items: flex-end;
    height: 24px;
    box-sizing: border-box;
    border-bottom: 1px solid #b6babf;
    background: linear-gradient(#93b7bd, #c3d6da 45%, #eef2f4);
}

.tab {
    padding: 0 14px;
    height: 23px;
    line-height: 24px;
    color: #4a4f55;
}

.tab-file {
    width: 54px;
    height: 22px;
    margin-bottom: 1px;
    box-sizing: border-box;
    line-height: 23px;
    text-align: center;
    color: #fff;
    background: linear-gradient(#3a9048, #1f7338);
    border-radius: 2px 2px 0 0;
}

.tab-active {
    margin-left: 6px;
    margin-right: 2px;
    padding: 0 11px;
    height: 24px;
    margin-bottom: -1px;
    box-sizing: border-box;
    line-height: 23px;
    background: #fff;
    border: 1px solid #b6babf;
    border-bottom: none;
    border-radius: 3px 3px 0 0;
}

/* ribbon */
.ribbon {
    flex: none;
    display: flex;
    height: 88px;
    box-sizing: border-box;
    border-bottom: 2px solid #a3a7ac;
    background: linear-gradient(#fff 40%, #f0f2f4);
}

.group {
    flex: none;
    display: flex;
    flex-direction: column;
    box-sizing: border-box;
    border-right: 1px solid #d5d8dc;
    box-shadow: 1px 0 0 #fff;
}

.group-clip { width: 161px; }
.group-font { width: 209px; padding-left: 5px; }
.group-align { width: 313px; padding-left: 5px; }
.group-number { width: 143px; padding-left: 5px; }
.group-styles { width: 606px; margin-right: 6px; }

.group-body {
    flex: 1;
    min-height: 0;
}

.stack {
    display: flex;
    flex-direction: column;
    gap: 7px;
    padding-top: 10px;
}

.group-label {
    position: relative;
    flex: none;
    height: 17px;
    line-height: 17px;
    text-align: center;
    color: #777b80;
}

.group-clip .group-label { padding-right: 22px; }
.group-font .group-label { padding-right: 24px; }
.group-align .group-label { padding-right: 22px; }
.group-number .group-label { padding-left: 5px; }
.group-styles .group-label { padding-left: 4px; }

.launch {
    position: absolute;
    right: 5px;
    top: 5px;
    width: 8px;
    height: 8px;
}

.caret {
    width: 0;
    height: 0;
    border-left: 3px solid transparent;
    border-right: 3px solid transparent;
    border-top: 3px solid #5a5f65;
}

.caret-near {
    margin-left: 0;
}

.caret-inline {
    display: inline-block;
    margin-left: 3px;
    vertical-align: middle;
}

.tri-up, .tri-down {
    position: absolute;
    width: 0;
    height: 0;
    border-left: 3px solid transparent;
    border-right: 3px solid transparent;
}

.tri-up {
    border-bottom: 3px solid #3b6ea8;
}

.tri-down {
    border-top: 3px solid #3b6ea8;
}

.tri-off {
    position: static;
    border-bottom-color: #b6b9bd;
}

/* clipboard */
.clip-body {
    display: flex;
}

.big-btn {
    display: flex;
    flex-direction: column;
    align-items: center;
}

.paste-btn {
    width: 47px;
    padding-top: 5px;
}

.ico-paste {
    width: 28px;
    height: 34px;
}

.big-label {
    margin-top: 1px;
    line-height: 13px;
    letter-spacing: .1px;
    text-align: center;
    white-space: nowrap;
    color: #3d4045;
}

.paste-btn .big-label {
    margin-top: 1px;
    margin-bottom: 7px;
}

.clip-list {
    display: flex;
    flex-direction: column;
    gap: 6px;
    padding-top: 4px;
}

.clip-row {
    display: flex;
    align-items: center;
    height: 16px;
    gap: 4px;
}

.ico {
    width: 16px;
    height: 16px;
    flex: none;
}

.ico-brush {
    width: 18px;
    margin-left: -2px;
}

.ico-tall {
    height: 18px;
}

.ico-wide {
    width: 17px;
}

/* toolbars */
.tool-row {
    display: flex;
    align-items: center;
    height: 22px;
}

.combo {
    display: flex;
    align-items: center;
    justify-content: space-between;
    height: 22px;
    box-sizing: border-box;
    padding: 0 4px 2px 2px;
    background: #fff;
    border: 1px solid #c9ccd0;
    color: #222;
}

.combo .caret {
    margin-top: 2px;
}

.combo-font { width: 112px; }
.combo-size { width: 42px; margin-left: 0; border-left: none; }
.combo-format { width: 134px; }

.tool {
    position: relative;
    display: flex;
    align-items: center;
    justify-content: center;
    flex: none;
    width: 22px;
    height: 22px;
    box-sizing: border-box;
    color: #222;
}

.tool-w { width: 23px; }

.tool-on {
    background: linear-gradient(#fde9a8, #fbcf68);
    border: 1px solid #d9a441;
    border-radius: 2px;
}

.tool-b { width: 23px; }

.face-b, .face-i, .face-u, .grow-a, .shrink-a, .face-color {
    font-family: "Liberation Serif", serif;
    font-weight: 700;
    font-size: 15px;
}

.face-i { font-style: italic; }
.face-u { text-decoration: underline; }

.grow-a {
    width: 24px;
    font-size: 18px;
}

.grow-a .tri-up {
    top: 3px;
    right: 1px;
}

.shrink-a {
    font-size: 14px;
}

.shrink-a .tri-down {
    top: 4px;
    right: 1px;
}

.face-color {
    flex-direction: column;
    font-size: 16px;
    line-height: 14px;
    color: #1f4f8f;
}

.color-bar {
    width: 16px;
    height: 4px;
    background: #000;
}

.face-num {
    font-size: 12px;
    color: #333;
}

.drop {
    display: flex;
    align-items: center;
    justify-content: center;
    flex: none;
    width: 11px;
    height: 22px;
}

.drop-sm { width: 7px; }
.drop-md { width: 8px; }

.sep {
    flex: none;
    width: 1px;
    height: 22px;
    background: #dcdfe2;
}

.ml1 { margin-left: 1px; }
.ml2 { margin-left: 2px; }
.ml3 { margin-left: 3px; }
.ml4 { margin-left: 4px; }
.ml5 { margin-left: 5px; }
.ml6 { margin-left: 6px; }
.ml15 { margin-left: 15px; }

.wide-btn {
    display: flex;
    align-items: center;
    gap: 3px;
    margin-left: 7px;
    margin-top: -2px;
    white-space: nowrap;
}

.wrap-text {
    letter-spacing: -.2px;
}

/* styles group */
.styles-body {
    display: flex;
    align-items: flex-start;
}

.cond-btn {
    width: 79px;
    padding: 6px 0 0 4px;
    box-sizing: border-box;
}

.table-btn {
    width: 80px;
    padding-top: 6px;
}

.ico-big {
    width: 32px;
    height: 30px;
    margin-bottom: 3px;
}

.gallery {
    display: flex;
    margin-top: 5px;
    height: 60px;
    width: 440px;
    box-sizing: border-box;
    border: 1px solid #cfd2d6;
    background: #fff;
}

.gallery-grid {
    flex: 1;
    display: grid;
    grid-template-columns: repeat(4, 100px);
    grid-auto-rows: 22px;
    column-gap: 6px;
    row-gap: 6px;
    padding: 4px 0 0 3px;
}

.cs {
    display: flex;
    align-items: center;
    box-sizing: border-box;
    padding: 0 0 4px 4px;
    font-family: "Lato", sans-serif;
    font-size: 14px;
    white-space: nowrap;
    overflow: hidden;
}

.cs-normal {
    margin: -2px 2px -2px -2px;
    padding-left: 4px;
    background: #fff;
    color: #222;
    border: 2px solid #f2c96c;
    border-radius: 2px;
    width: 104px;
}

.cs-bad { background: #ffc7ce; color: #9c0006; }
.cs-neutral { background: #ffeb9c; color: #9c6500; }
.cs-good { background: #c6efce; color: #006100; }

.cs-check {
    width: 100px;
    background: #a5a5a5;
    color: #fff;
    font-weight: 700;
    padding: 0 0 2px 1px;
    letter-spacing: .25px;
    border: 3px double #3f3f3f;
}

.cs-note {
    background: #ffffcc;
    color: #222;
    padding-bottom: 2px;
    border: 1px solid #b2b2b2;
}

.cs-linked {
    color: #e8822f;
    padding-bottom: 1px;
    border-bottom: 3px double #e8a050;
}

.cs-warn {
    color: #e00012;
}

.gallery-scroll {
    display: flex;
    flex-direction: column;
    width: 14px;
    border-left: 1px solid #d5d8dc;
}

.gallery-scroll span {
    flex: 1;
    display: flex;
    align-items: center;
    justify-content: center;
    border-bottom: 1px solid #d5d8dc;
}

.gallery-more {
    position: relative;
    border-bottom: none !important;
}

.gallery-more::before {
    content: "";
    position: absolute;
    top: 5px;
    left: 4px;
    width: 6px;
    height: 1px;
    background: #5a5f65;
}

/* quick access toolbar */
.qat {
    flex: none;
    display: flex;
    align-items: center;
    height: 28px;
    box-sizing: border-box;
    padding: 2px 0 0;
    background: #d4d6da;
    border-bottom: 2px solid #a3a7ac;
}

.qi {
    flex: none;
    width: 16px;
    height: 16px;
    margin: 0 3px;
}

.qsep {
    flex: none;
    width: 1px;
    height: 18px;
    margin: 0 4px;
    background: #a4a8ad;
}

.qarrow {
    flex: none;
    width: 0;
    height: 0;
    margin-left: -1px;
    margin-right: 3px;
    border-left: 4px solid transparent;
    border-right: 4px solid transparent;
    border-top: 4px solid #222;
}

.qarrow-tight {
    margin-left: -2px;
    margin-right: 2px;
}

.qarrow-off {
    border-top-color: #a5a9ae;
}

.qfx {
    font: italic 700 13px/16px "Liberation Serif", serif;
    color: #222;
    text-align: center;
}

/* formula bar */
.formula {
    flex: none;
    display: flex;
    height: 60px;
}

.formula-left {
    flex: none;
    width: 244px;
    box-sizing: border-box;
    background: #dfe2e6;
    border-right: 1px solid #9ea2a7;
}

.formula-top {
    display: flex;
    align-items: center;
    height: 22px;
    box-sizing: border-box;
    padding-bottom: 2px;
    background: #fff;
    border-bottom: 1px solid #a6aaaf;
}

.name-box {
    position: relative;
    flex: none;
    width: 158px;
    padding-left: 62px;
    box-sizing: border-box;
    font: 14px "Lato", sans-serif;
    color: #222;
}

.name-box .caret {
    position: absolute;
    right: 3px;
    top: 7px;
    border-left-width: 4px;
    border-right-width: 4px;
    border-top: 4px solid #333;
}

.grip {
    width: 20px;
    height: 20px;
    box-sizing: border-box;
    background: radial-gradient(circle at 11px 8px, #c5c9ce 0 3px, transparent 4px), #fff;
    border: 1px solid #b4b8bd;
    border-right: none;
    border-radius: 10px 0 0 10px;
}

.fx {
    margin-left: 46px;
    font: italic 700 15px "Liberation Serif", serif;
    color: #333;
}

.formula-input {
    flex: 1;
    padding: 1px 8px;
    font: 14px/18px "Lato", sans-serif;
    color: #222;
}

.formula-gap {
    flex: none;
    height: 5px;
    box-sizing: border-box;
    border-top: 3px solid #f4f5f6;
    background: #c9ccd0;
}

/* sheet */
.sheet {
    position: relative;
    flex: none;
    height: 812px;
    overflow: hidden;
}

.cells {
    width: 1451px;
    table-layout: fixed;
    border-collapse: separate;
    border-spacing: 0;
    font: 14px "Lato", sans-serif;
    color: #111;
}

.c-head { width: 25px; }
.c-a { width: 96px; }
.c-b { width: 82px; }
.c-c { width: 64px; }
.c-d { width: 90px; }
.c-e { width: 90px; }
.c-f { width: 91px; }
.c-g { width: 64px; }
.c-h { width: 128px; }
.c-k { width: 81px; }
.c-std { width: 64px; }

.cells tr {
    height: 20px;
}

.cells th {
    padding: 0;
    height: 20px;
    box-sizing: border-box;
    background: #e1e4e8;
    border-right: 1px solid #b3b7bc;
    border-bottom: 1px solid #b3b7bc;
    font-weight: 400;
    color: #444;
    text-align: center;
    line-height: 19px;
}

.cells th.on {
    background: linear-gradient(#fbdc8d, #f7c35f);
    border-color: #c8a04f;
}

.cells th.corner {
    background: linear-gradient(135deg, transparent 50%, #b9bdc2 50%) no-repeat right 3px bottom 3px / 12px 12px, #e1e4e8;
}

.cells td {
    height: 20px;
    box-sizing: border-box;
    padding: 0 2px;
    border-right: 1px solid #d9d9d9;
    border-bottom: 1px solid #d9d9d9;
    line-height: 19px;
    white-space: nowrap;
    overflow: hidden;
}

.title-row td {
    font-weight: 700;
    overflow: visible;
}

.cells .num {
    padding-top: 1px;
    text-align: right;
    font-size: 13px;
    line-height: 18px;
    letter-spacing: -.2px;
}

.ctr { text-align: center; }

.note-tight { letter-spacing: -.1px; }
.note-loose { letter-spacing: .08px; }

.cells .yellow {
    background: #ffff00;
    border-color: #ffff00;
}

.cells .blue {
    background: #0070c0;
    border-color: #0070c0;
    color: #ffff00;
}

.cells .active {
    position: relative;
    outline: 2px solid #000;
    outline-offset: -1px;
}

.cells .active::after {
    content: "";
    position: absolute;
    right: -4px;
    bottom: -3px;
    width: 5px;
    height: 5px;
    background: #000;
    border: 1px solid #fff;
}

/* chart */
.chart {
    position: absolute;
    left: 780px;
    top: 31px;
    width: 614px;
    height: 483px;
    box-sizing: border-box;
    background: #fff;
    border: 1px solid #868686;
}

.chart-svg {
    position: absolute;
    left: -1px;
    top: -1px;
    width: 614px;
    height: 483px;
}

.chart-title {
    font: 700 26px "Lato", sans-serif;
    text-anchor: middle;
    text-decoration: underline;
    fill: #000;
}

.chart-lbl {
    font: 700 13px "Lato", sans-serif;
    text-anchor: middle;
    fill: #111;
}

.chart-leg {
    font: 14px "Lato", sans-serif;
    letter-spacing: .3px;
    fill: #333;
}

/* sheet bar */
.sheet-bar {
    flex: none;
    display: flex;
    align-items: stretch;
    height: 16px;
    box-sizing: border-box;
    background: #dfe2e6;
    border-top: 1px solid #8f9398;
    border-bottom: 1px solid #9a9ea3;
}

.sheet-nav {
    flex: none;
    display: flex;
    align-items: center;
    width: 62px;
    box-sizing: border-box;
    padding-left: 5px;
    border-right: 1px solid #a9adb2;
}

.sheet-nav span {
    position: relative;
    width: 14.500px;
    height: 7px;
}

.sheet-nav span::before {
    content: "";
    position: absolute;
    left: 3px;
    top: 0;
    border-top: 3.500px solid transparent;
    border-bottom: 3.500px solid transparent;
}

.nav-first::before, .nav-prev::before {
    border-right: 4px solid #444;
}

.nav-next::before, .nav-last::before {
    border-left: 4px solid #444;
}

.nav-first::after, .nav-last::after {
    content: "";
    position: absolute;
    top: 0;
    width: 1px;
    height: 7px;
    background: #444;
}

.nav-first::after { left: 1px; }
.nav-last::after { left: 8px; }

.sheet-tab {
    position: relative;
    flex: none;
    width: 46px;
    padding-left: 9px;
    box-sizing: border-box;
    line-height: 14px;
    font-family: "Noto Sans", sans-serif;
    font-size: 11.500px;
    color: #555;
}

.sheet-tab::after {
    content: "";
    position: absolute;
    right: 3px;
    top: 0;
    height: 15px;
    width: 1px;
    background: #8f9398;
    transform: skewX(-42deg);
}

.sheet-tab-on {
    width: 48px;
    background: #f4f5f6;
    font-weight: 700;
    color: #333;
}

.sheet-tab-new {
    width: 36px;
    padding-left: 8px;
}

.newsheet {
    width: 16px;
    height: 14px;
}

.bar-fill {
    flex: 1;
}

.split-handle {
    flex: none;
    width: 8px;
    margin: 1px 5px 1px 0;
    box-sizing: border-box;
    background: linear-gradient(90deg, #fff 3px, #9a9ea3 3px, #9a9ea3 4px, #fff 4px);
    border: 1px solid #8f9398;
}

.scroll-left {
    position: relative;
    flex: none;
    width: 16px;
}

.scroll-left::before {
    content: "";
    position: absolute;
    left: 4px;
    top: 2px;
    border-top: 5px solid transparent;
    border-bottom: 5px solid transparent;
    border-right: 5px solid #444;
}

.scroll-track {
    flex: none;
    width: 273px;
    box-sizing: border-box;
    background: linear-gradient(#f2f3f5, #dfe2e6);
    border-left: 1px solid #aeb2b7;
}

/* status bar */
.status {
    flex: none;
    height: 7px;
    background: #e0e3e7;
}

.status-cell {
    display: block;
    width: 34px;
    height: 7px;
    margin-left: 65px;
    box-sizing: border-box;
    padding: 1px 0 0 9px;
    border-left: 1px solid #b6babf;
    border-right: 1px solid #b6babf;
}

.status-icon {
    width: 15px;
    height: 6px;
    background: linear-gradient(90deg, #d9534f 40%, #4f81bd 40%);
}
```
